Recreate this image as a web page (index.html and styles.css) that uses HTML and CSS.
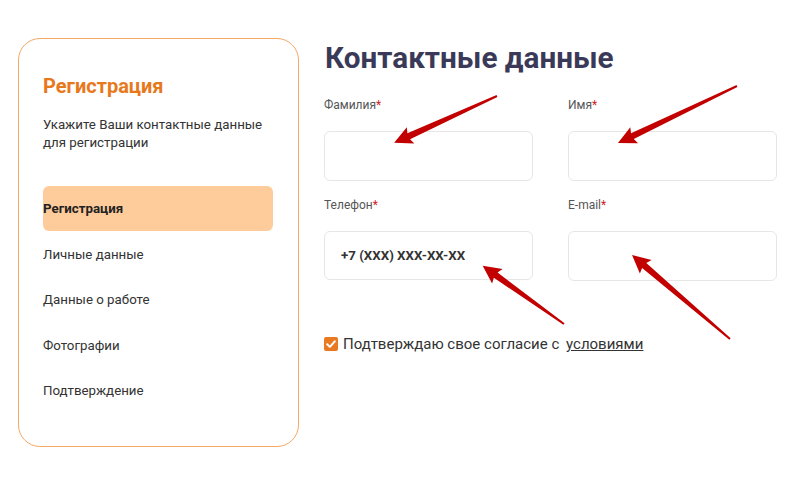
FILE: index.html
```html
<!DOCTYPE html>
<html lang="ru">
<head>
<meta charset="utf-8">
<title>Регистрация</title>
<link rel="stylesheet" href="styles.css">
</head>
<body>
<div class="page">
  <aside class="sidebar">
    <h2 class="side-title">Регистрация</h2>
    <p class="side-sub">Укажите Ваши контактные данные для регистрации</p>
    <ul class="steps">
      <li class="step active">Регистрация</li>
      <li class="step">Личные данные</li>
      <li class="step">Данные о работе</li>
      <li class="step">Фотографии</li>
      <li class="step">Подтверждение</li>
    </ul>
  </aside>
  <main class="main">
    <h1 class="heading">Контактные данные</h1>
    <div class="grid">
      <div class="field">
        <label class="label">Фамилия<span class="req">*</span></label>
        <div class="input"></div>
      </div>
      <div class="field">
        <label class="label">Имя<span class="req">*</span></label>
        <div class="input"></div>
      </div>
      <div class="field">
        <label class="label">Телефон<span class="req">*</span></label>
        <div class="input phone">+7 (XXX) XXX-XX-XX</div>
      </div>
      <div class="field">
        <label class="label">E-mail<span class="req">*</span></label>
        <div class="input"></div>
      </div>
    </div>
    <div class="agree">
      <span class="check"><svg viewBox="0 0 14 14" width="14" height="14"><path d="M3.2 7.2 L5.9 9.9 L10.8 4.3" fill="none" stroke="#fff" stroke-width="2" stroke-linecap="round" stroke-linejoin="round"/></svg></span>
      <span class="agree-text">Подтверждаю свое согласие с <a class="terms" href="#">условиями</a></span>
    </div>
  </main>
</div>
<svg class="arrows" width="800" height="489" viewBox="0 0 800 489">
  <g fill="#c20000">
    <path transform="translate(497,96) rotate(155.5)" d="M0,-1 L97,-3.2 L95,-9 L113,0 L95,9 L97,3.2 L0,1 Z"/>
    <path transform="translate(737,86) rotate(154.4)" d="M0,-1 L116,-3.2 L114,-9 L132,0 L114,9 L116,3.2 L0,1 Z"/>
    <path transform="translate(564,324) rotate(-144.4)" d="M0,-1 L84,-3.2 L82,-9 L100,0 L82,9 L84,3.2 L0,1 Z"/>
    <path transform="translate(730,339) rotate(-139.4)" d="M0,-1 L113,-3.2 L111,-9 L129,0 L111,9 L113,3.2 L0,1 Z"/>
  </g>
</svg>
</body>
</html>
```

FILE: styles.css
```css
* { box-sizing: border-box; }
html, body { margin: 0; padding: 0; }
body {
  position: relative;
  width: 800px;
  height: 489px;
  overflow: hidden;
  background: #fff;
  font-family: Roboto, "Liberation Sans", sans-serif;
  color: #333;
}
.page {
  display: flex;
  align-items: flex-start;
  padding: 38px 0 0 18px;
  gap: 25px;
}
.sidebar {
  width: 281px;
  height: 409px;
  border: 1px solid #f4a864;
  border-radius: 22px;
  padding: 35px 25px 0 24px;
}
.side-title {
  margin: 0;
  font-size: 20px;
  line-height: 24px;
  font-weight: 700;
  color: #e8781c;
}
.side-sub {
  margin: 18px 0 0;
  font-size: 13.3px;
  line-height: 18px;
  color: #333;
}
.steps {
  list-style: none;
  margin: 34px 0 0;
  padding: 0;
}
.step {
  height: 45.5px;
  display: flex;
  align-items: center;
  font-size: 13.3px;
  color: #333;
}
.step.active {
  height: 45px;
  margin-bottom: 0.5px;
  background: #fecc9b;
  border-radius: 6px;
  font-weight: 700;
  color: #222;
}
.main {
  width: 453px;
}
.heading {
  margin: 2px 0 0 1px;
  font-size: 29.7px;
  line-height: 36px;
  font-weight: 700;
  color: #3a3a58;
}
.grid {
  display: grid;
  grid-template-columns: 209px 209px;
  column-gap: 35px;
  row-gap: 16px;
  margin-top: 21px;
}
.field {
  display: flex;
  flex-direction: column;
  gap: 18px;
}
.label {
  font-size: 12px;
  line-height: 16px;
  color: #555;
}
.req { color: #d0222a; }
.input {
  height: 50px;
  border: 1px solid #e6e6e6;
  border-radius: 6px;
  display: flex;
  align-items: center;
  padding-left: 16px;
}
.input.phone {
  height: 49px;
  font-size: 13.3px;
  font-weight: 700;
  color: #333;
}
.agree {
  display: flex;
  align-items: center;
  gap: 5px;
  margin-top: 53px;
  height: 20px;
}
.check {
  width: 14px;
  height: 14px;
  background: #ea7a22;
  border-radius: 2px;
  display: flex;
}
.agree-text {
  font-size: 15px;
  line-height: 20px;
  color: #333;
}
.terms {
  color: #333;
  margin-left: 3px;
  text-decoration: underline;
}
.arrows {
  position: absolute;
  top: 0;
  left: 0;
  pointer-events: none;
}
```
